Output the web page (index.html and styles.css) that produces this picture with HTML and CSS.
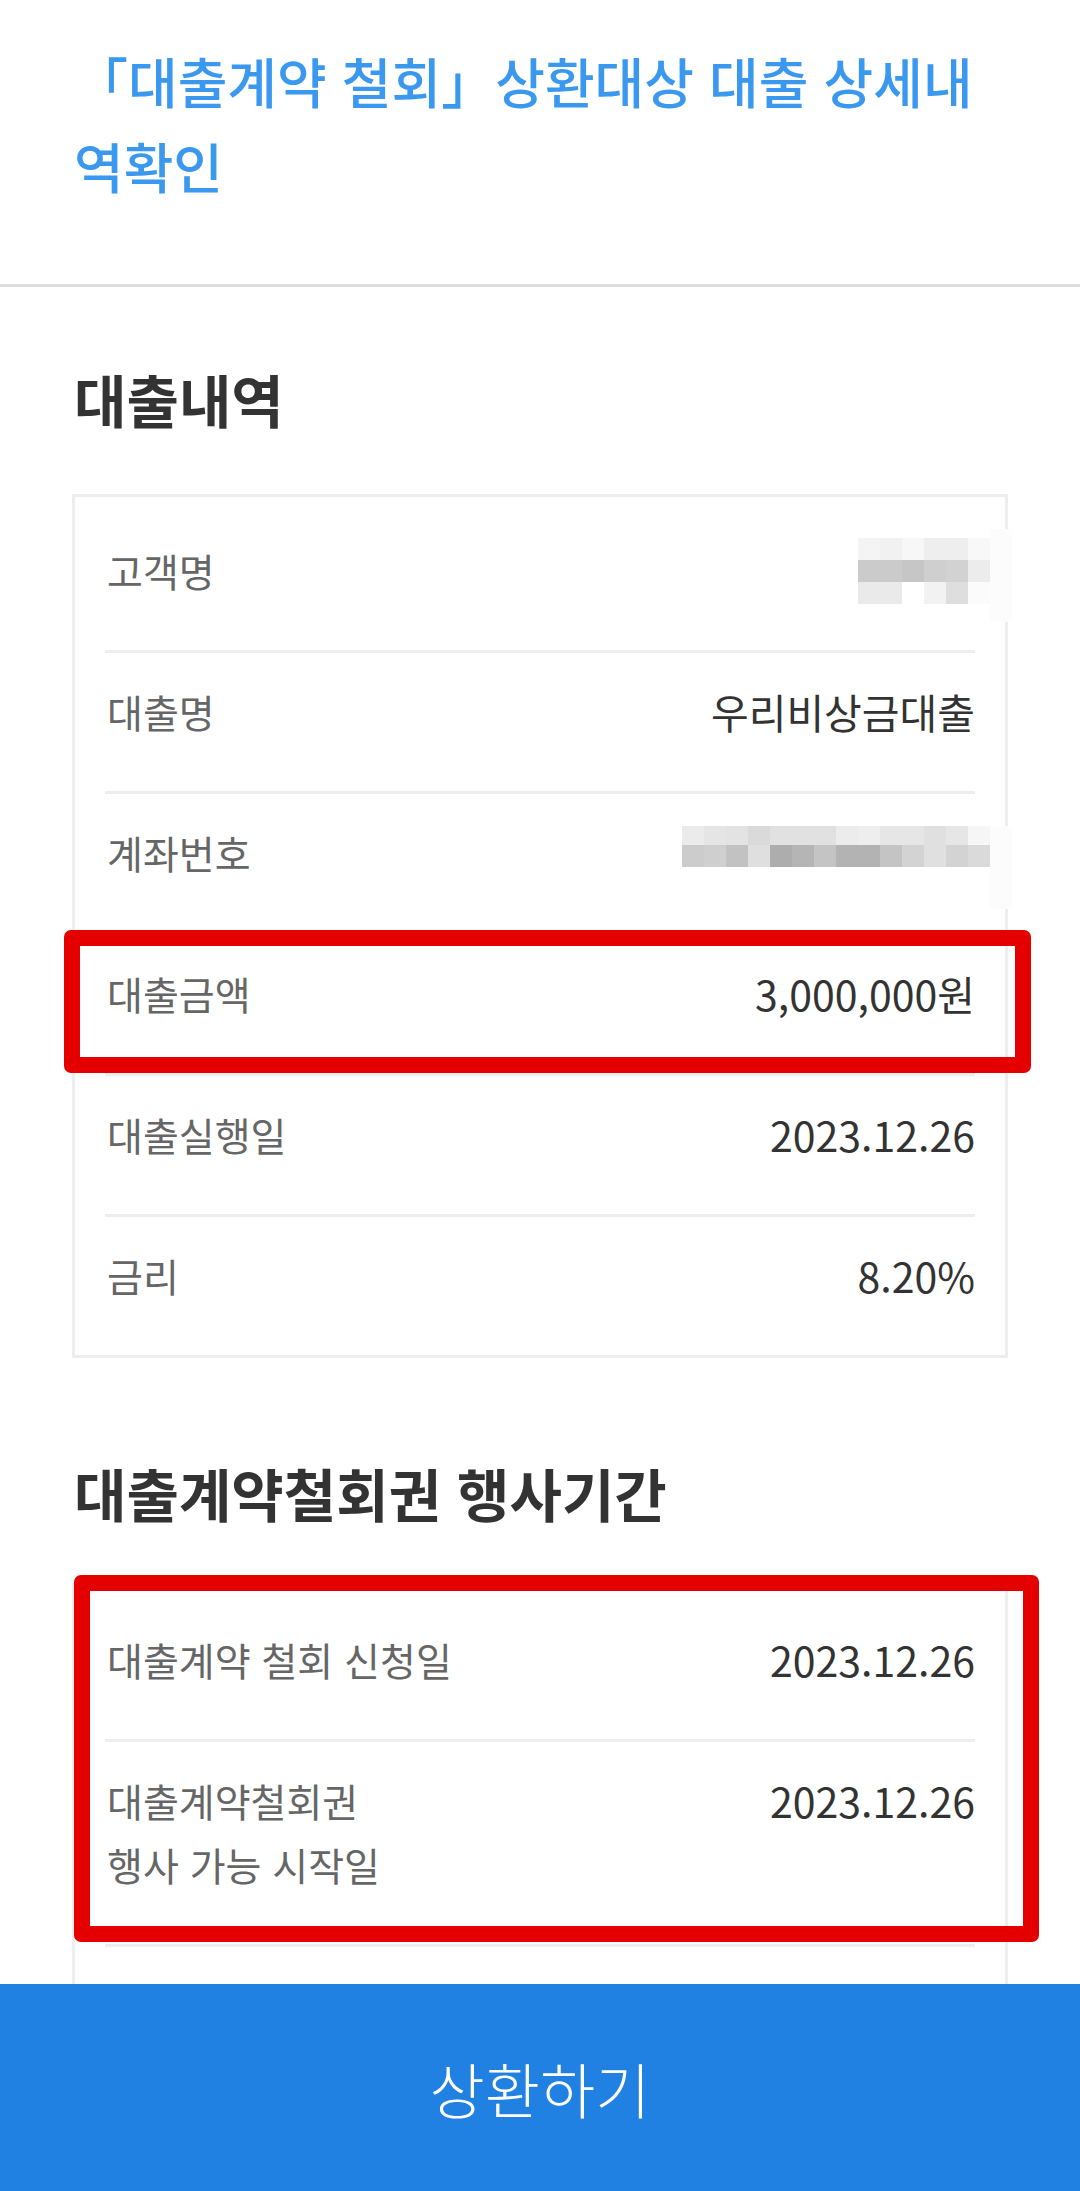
FILE: index.html
```html
<!DOCTYPE html>
<html lang="ko">
<head>
<meta charset="utf-8">
<title>대출계약 철회 상환대상 대출 상세내역확인</title>
<link rel="stylesheet" href="styles.css">
</head>
<body>
<header class="header">
  <h1 class="title">「대출계약 철회」상환대상 대출 상세내역확인</h1>
</header>

<main class="content">
  <h2 class="section-title sec1">대출내역</h2>
  <div class="card card1">
    <div class="row">
      <span class="label">고객명</span>
      <div class="mask mask-name">
        <div class="mosaic mosaic6">
          <i class="c f4"></i><i class="c f1"></i><i class="c f7"></i><i class="c ee"></i><i class="c ee"></i><i class="c f8"></i>
          <i class="c cb"></i><i class="c cb"></i><i class="c c6"></i><i class="c cf"></i><i class="c d2"></i><i class="c ec"></i>
          <i class="c ea"></i><i class="c ea"></i><i class="c ff"></i><i class="c f2"></i><i class="c de"></i><i class="c fb"></i>
        </div>
        <div class="strip strip-name"></div>
      </div>
    </div>
    <div class="row">
      <span class="label">대출명</span>
      <span class="value">우리비상금대출</span>
    </div>
    <div class="row">
      <span class="label">계좌번호</span>
      <div class="mask mask-acct">
        <div class="mosaic mosaic14">
          <i class="c eb"></i><i class="c e5"></i><i class="c e3"></i><i class="c da"></i><i class="c e1"></i><i class="c e1"></i><i class="c e1"></i><i class="c ec"></i><i class="c ee"></i><i class="c e6"></i><i class="c e6"></i><i class="c e0"></i><i class="c e6"></i><i class="c f6"></i>
          <i class="c cc"></i><i class="c cf"></i><i class="c c2"></i><i class="c df"></i><i class="c ad"></i><i class="c b5"></i><i class="c c4"></i><i class="c b3"></i><i class="c b3"></i><i class="c c4"></i><i class="c d3"></i><i class="c e0"></i><i class="c d3"></i><i class="c da"></i>
        </div>
        <div class="strip strip-acct"></div>
      </div>
    </div>
    <div class="row">
      <span class="label">대출금액</span>
      <span class="value">3,000,000원</span>
    </div>
    <div class="row">
      <span class="label">대출실행일</span>
      <span class="value">2023.12.26</span>
    </div>
    <div class="row">
      <span class="label">금리</span>
      <span class="value">8.20%</span>
    </div>
    <div class="mark mark1"></div>
  </div>

  <h2 class="section-title sec2">대출계약철회권 행사기간</h2>
  <div class="card card2">
    <div class="row">
      <span class="label">대출계약 철회 신청일</span>
      <span class="value">2023.12.26</span>
    </div>
    <div class="row">
      <span class="label">대출계약철회권<br>행사 가능 시작일</span>
      <span class="value">2023.12.26</span>
    </div>
    <div class="row row-empty"></div>
    <div class="mark mark2"></div>
  </div>
</main>

<div class="bottom-bar">
  <button class="btn-repay" type="button">상환하기</button>
</div>
</body>
</html>
```

FILE: styles.css
```css
* {
  box-sizing: border-box;
}

html, body {
  margin: 0;
  padding: 0;
  background: #ffffff;
}

body {
  font-family: "Noto Sans CJK KR", "Noto Sans", sans-serif;
  color: #333333;
  padding-bottom: 240px;
}

.header {
  padding: 38px 74px 76px 74px;
  border-bottom: 3px solid #dddddd;
}

.title {
  margin: 0;
  font-size: 54px;
  line-height: 85px;
  font-weight: 500;
  color: #3b98ef;
  letter-spacing: 0;
}

.content {
  padding: 0 72px;
}

.section-title {
  margin: 0;
  font-size: 57px;
  line-height: 60px;
  font-weight: 700;
  color: #333333;
  padding-left: 2px;
}

.sec1 {
  margin-top: 81px;
  margin-bottom: 66px;
}

.sec2 {
  margin-top: 104px;
  margin-bottom: 61px;
}

.card {
  position: relative;
  border: 3px solid #eeeeee;
  padding: 15px 30px 0 30px;
}

.row {
  display: flex;
  justify-content: space-between;
  align-items: flex-start;
  padding: 26px 0 48px 0;
  border-bottom: 3px solid #eeeeee;
}

.row:last-of-type {
  border-bottom: none;
}

.card1 .row:nth-last-child(2) {
  border-bottom: none;
}

.label {
  font-size: 39px;
  line-height: 64px;
  color: #666666;
  padding-left: 2px;
}

.value {
  font-size: 41px;
  line-height: 64px;
  color: #333333;
  letter-spacing: 0;
}

.row-empty {
  height: 138px;
  border-bottom: none;
}

/* masked (blurred) values */
.mask {
  display: flex;
  height: 64px;
  margin-right: -37px;
  align-items: flex-start;
}

.mosaic {
  display: grid;
}

.mosaic6 {
  grid-template-columns: repeat(6, 22px);
  grid-template-rows: repeat(3, 22px);
}

.mosaic14 {
  grid-template-columns: repeat(14, 22px);
  grid-template-rows: 19px 22px;
  margin-top: 6px;
}

.c { display: block; }
.f4 { background: #f4f4f4; }
.f1 { background: #f1f1f1; }
.f7 { background: #f7f7f7; }
.ee { background: #eeeeee; }
.f8 { background: #f8f8f8; }
.cb { background: #cbcbcb; }
.c6 { background: #c6c6c6; }
.cf { background: #cfcfcf; }
.d2 { background: #d2d2d2; }
.ec { background: #ececec; }
.ea { background: #eaeaea; }
.ff { background: #ffffff; }
.f2 { background: #f2f2f2; }
.de { background: #dedede; }
.fb { background: #fbfbfb; }
.eb { background: #ebebeb; }
.e5 { background: #e5e5e5; }
.e3 { background: #e3e3e3; }
.da { background: #dadada; }
.e1 { background: #e1e1e1; }
.e6 { background: #e6e6e6; }
.e0 { background: #e0e0e0; }
.f6 { background: #f6f6f6; }
.cc { background: #cccccc; }
.c2 { background: #c2c2c2; }
.df { background: #dfdfdf; }
.ad { background: #adadad; }
.b5 { background: #b5b5b5; }
.c4 { background: #c4c4c4; }
.b3 { background: #b3b3b3; }
.d3 { background: #d3d3d3; }

.strip {
  width: 22px;
  background: #fcfcfc;
  flex: none;
}

.strip-name {
  height: 93px;
  margin-top: -9px;
}

.strip-acct {
  height: 83px;
  margin-top: 6px;
}

/* red annotation boxes */
.mark {
  position: absolute;
  border: 16px solid #e50000;
  border-radius: 7px;
  pointer-events: none;
}

.mark1 {
  left: -11px;
  top: 433px;
  width: 967px;
  height: 143px;
}

.mark2 {
  left: -1px;
  top: -11px;
  width: 965px;
  height: 367px;
}

/* bottom button */
.bottom-bar {
  position: fixed;
  left: 0;
  right: 0;
  bottom: 0;
  height: 207px;
}

.btn-repay {
  display: block;
  width: 100%;
  height: 100%;
  border: none;
  margin: 0;
  padding: 0;
  background: #2081e2;
  color: #ffffff;
  font-family: "Noto Sans CJK KR", "Noto Sans", sans-serif;
  font-size: 60px;
  font-weight: 300;
}
```
